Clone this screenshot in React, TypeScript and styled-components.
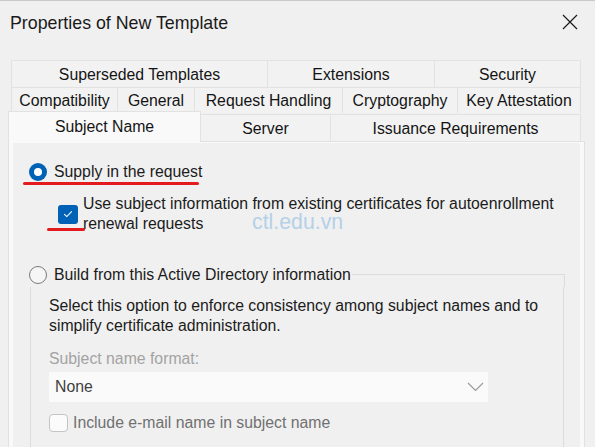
import React from "react";
import styled, { createGlobalStyle } from "styled-components";

const Global = createGlobalStyle`
  html, body { margin: 0; padding: 0; background: #f0f0f0; }
  * { box-sizing: border-box; }
`;

const Window = styled.div`
  position: relative;
  width: 595px;
  height: 447px;
  overflow: hidden;
  background: #f0f0f0;
  border-top: 1px solid #c9c9c9;
  font-family: "Liberation Sans", Arial, sans-serif;
  font-size: 15.8px;
  color: #1b1b1b;
`;

const TitleBar = styled.div`
  height: 42px;
  display: flex;
  align-items: center;
  justify-content: space-between;
  padding: 0 17px 0 10px;
`;

const Title = styled.div`
  font-size: 17.8px;
  color: #1a1a1a;
  padding-top: 2px;
`;

const CloseIcon = styled.svg`
  width: 16px;
  height: 16px;
  display: block;
`;

const TabArea = styled.div`
  margin-top: 17px;
  display: flex;
  flex-direction: column;
`;

const TabRow = styled.div<{ $left: number; $height: number; $overlap?: number }>`
  display: flex;
  align-items: flex-end;
  padding-left: ${(p) => p.$left}px;
  height: ${(p) => p.$height}px;
  margin-top: ${(p) => -(p.$overlap || 0)}px;
  position: relative;
`;

const Tab = styled.div<{ $w: number; $h: number; $selected?: boolean; $dy?: number }>`
  width: ${(p) => p.$w}px;
  height: ${(p) => p.$h}px;
  margin-right: -1px;
  border: 1px solid #e2e2e2;
  border-bottom: none;
  background: ${(p) => (p.$selected ? "#f9f9f9" : "#f2f2f2")};
  display: flex;
  align-items: center;
  justify-content: center;
  padding-top: ${(p) => p.$dy || 0}px;
  white-space: nowrap;
  color: #141414;
  position: relative;
  z-index: ${(p) => (p.$selected ? 2 : 1)};
  margin-bottom: ${(p) => (p.$selected ? -1 : 0)}px;
`;

const Panel = styled.div`
  margin-left: 8px;
  width: 577px;
  height: 320px;
  border: 1px solid #e1e1e1;
  background: #f9f9f9;
  padding: 1px 4px 0 4px;
  position: relative;
  z-index: 1;
`;

const Page = styled.div`
  position: relative;
  height: 100%;
  background: #f0f0f0;
  padding: 19px 16px 0 16px;
  display: flex;
  flex-direction: column;
`;

const OptionRow = styled.label`
  display: flex;
  align-items: center;
  gap: 7px;
  height: 20px;
  line-height: 20px;
  white-space: nowrap;
`;

const Radio = styled.span<{ $checked?: boolean }>`
  width: 18px;
  height: 18px;
  border-radius: 50%;
  flex: none;
  display: flex;
  align-items: center;
  justify-content: center;
  background: ${(p) => (p.$checked ? "#0062b6" : "#f6f6f6")};
  border: ${(p) => (p.$checked ? "none" : "1px solid #7a7a7a")};
  &::after {
    content: "";
    display: ${(p) => (p.$checked ? "block" : "none")};
    width: 8px;
    height: 8px;
    border-radius: 50%;
    background: #ffffff;
  }
`;

const CheckRow = styled.label<{ $indent: number; $top: number; $disabled?: boolean }>`
  display: flex;
  align-items: center;
  gap: 5px;
  margin-left: ${(p) => p.$indent}px;
  margin-top: ${(p) => p.$top}px;
  color: ${(p) => (p.$disabled ? "#707070" : "#1b1b1b")};
  line-height: 20px;
`;

const Box = styled.span<{ $checked?: boolean }>`
  width: 20px;
  height: 19px;
  flex: none;
  border-radius: 3px;
  display: flex;
  align-items: center;
  justify-content: center;
  background: ${(p) => (p.$checked ? "#0062b6" : "#fbfbfb")};
  border: ${(p) => (p.$checked ? "none" : "1px solid #c4c4c4")};
`;

const Group = styled.div`
  margin-top: 31px;
  display: flex;
  flex-direction: column;
`;

const GroupHeader = styled.div`
  display: flex;
  height: 22px;
  margin-right: -1px;
`;

const HeaderLine = styled.div`
  flex: 1;
  margin-top: 9px;
  border-top: 1px solid #dcdcdc;
  border-right: 1px solid #dcdcdc;
  margin-left: 1px;
`;

const GroupBody = styled.div`
  margin-left: 1px;
  height: 200px;
  border-left: 1px solid #dcdcdc;
  border-right: 1px solid #dcdcdc;
  padding: 9px 0 0 18px;
  display: flex;
  flex-direction: column;
`;

const Description = styled.div`
  line-height: 19.5px;
  width: 500px;
`;

const FieldLabel = styled.div`
  margin-top: 14px;
  line-height: 20px;
  color: #a3a3a3;
`;

const Combo = styled.div`
  margin-top: 3px;
  width: 439px;
  height: 30px;
  background: #fafafa;
  display: flex;
  align-items: center;
  justify-content: space-between;
  padding: 0 4px 0 6px;
  color: #3f3f3f;
`;

const Chevron = styled.svg`
  width: 17px;
  height: 10px;
  display: block;
`;

const SmallBox = styled(Box)`
  width: 19px;
  height: 18px;
  border-radius: 4px;
`;

const Underline = styled.div<{ $x: number; $y: number; $w: number }>`
  position: absolute;
  left: ${(p) => p.$x}px;
  top: ${(p) => p.$y}px;
  width: ${(p) => p.$w}px;
  height: 3px;
  border-radius: 2px;
  background: #e31b1f;
  z-index: 5;
`;

const Watermark = styled.div`
  position: absolute;
  left: 239px;
  top: 67px;
  font-size: 21.3px;
  color: #b5d1e8;
  pointer-events: none;
  z-index: 4;
`;

const topRows = [
  [
    { label: "Superseded Templates", w: 257 },
    { label: "Extensions", w: 168 },
    { label: "Security", w: 147 },
  ],
  [
    { label: "Compatibility", w: 107 },
    { label: "General", w: 78 },
    { label: "Request Handling", w: 149 },
    { label: "Cryptography", w: 116 },
    { label: "Key Attestation", w: 124 },
  ],
];

const bottomRow = [
  { label: "Subject Name", w: 193, selected: true },
  { label: "Server", w: 131 },
  { label: "Issuance Requirements", w: 251 },
];

export default function App() {
  return (
    <>
      <Global />
      <Window>
        <TitleBar>
          <Title>Properties of New Template</Title>
          <CloseIcon viewBox="0 0 16 16">
            <path d="M1 1 L15 15 M15 1 L1 15" stroke="#1a1a1a" strokeWidth="1.2" fill="none" />
          </CloseIcon>
        </TitleBar>

        <TabArea>
          <TabRow $left={11} $height={27}>
            {topRows[0].map((t) => (
              <Tab key={t.label} $w={t.w} $h={27} $dy={1}>
                {t.label}
              </Tab>
            ))}
          </TabRow>
          <TabRow $left={11} $height={26}>
            {topRows[1].map((t) => (
              <Tab key={t.label} $w={t.w} $h={26} $dy={1}>
                {t.label}
              </Tab>
            ))}
          </TabRow>
          <TabRow $left={8} $height={30} $overlap={2}>
            {bottomRow.map((t) => (
              <Tab
                key={t.label}
                $w={t.w}
                $h={t.selected ? 31 : 27}
                $selected={t.selected}
                $dy={t.selected ? -2 : 1}
              >
                {t.label}
              </Tab>
            ))}
          </TabRow>
        </TabArea>

        <Panel>
          <Page>
            <OptionRow>
              <Radio $checked />
              Supply in the request
            </OptionRow>
            <Underline $x={10} $y={39} $w={176} />

            <CheckRow $indent={29} $top={12}>
              <Box $checked>
                <svg width="10" height="8" viewBox="0 0 10 8">
                  <path d="M1.2 4.2 L3.8 6.6 L8.8 1.4" stroke="#ffffff" strokeWidth="1.1" fill="none" />
                </svg>
              </Box>
              <span>
                Use subject information from existing certificates for autoenrollment
                <br />
                renewal requests
              </span>
            </CheckRow>
            <Underline $x={34} $y={85} $w={38} />
            <Watermark>ctl.edu.vn</Watermark>

            <Group>
              <GroupHeader>
                <OptionRow>
                  <Radio />
                  Build from this Active Directory information
                </OptionRow>
                <HeaderLine />
              </GroupHeader>
              <GroupBody>
                <Description>
                  Select this option to enforce consistency among subject names and to
                  <br />
                  simplify certificate administration.
                </Description>
                <FieldLabel>Subject name format:</FieldLabel>
                <Combo>
                  <span>None</span>
                  <Chevron viewBox="0 0 17 10">
                    <path d="M1 1 L8.5 8.5 L16 1" stroke="#9a9a9a" strokeWidth="1.2" fill="none" />
                  </Chevron>
                </Combo>
                <CheckRow $indent={0} $top={11} $disabled>
                  <SmallBox />
                  <span>Include e-mail name in subject name</span>
                </CheckRow>
              </GroupBody>
            </Group>
          </Page>
        </Panel>
      </Window>
    </>
  );
}
